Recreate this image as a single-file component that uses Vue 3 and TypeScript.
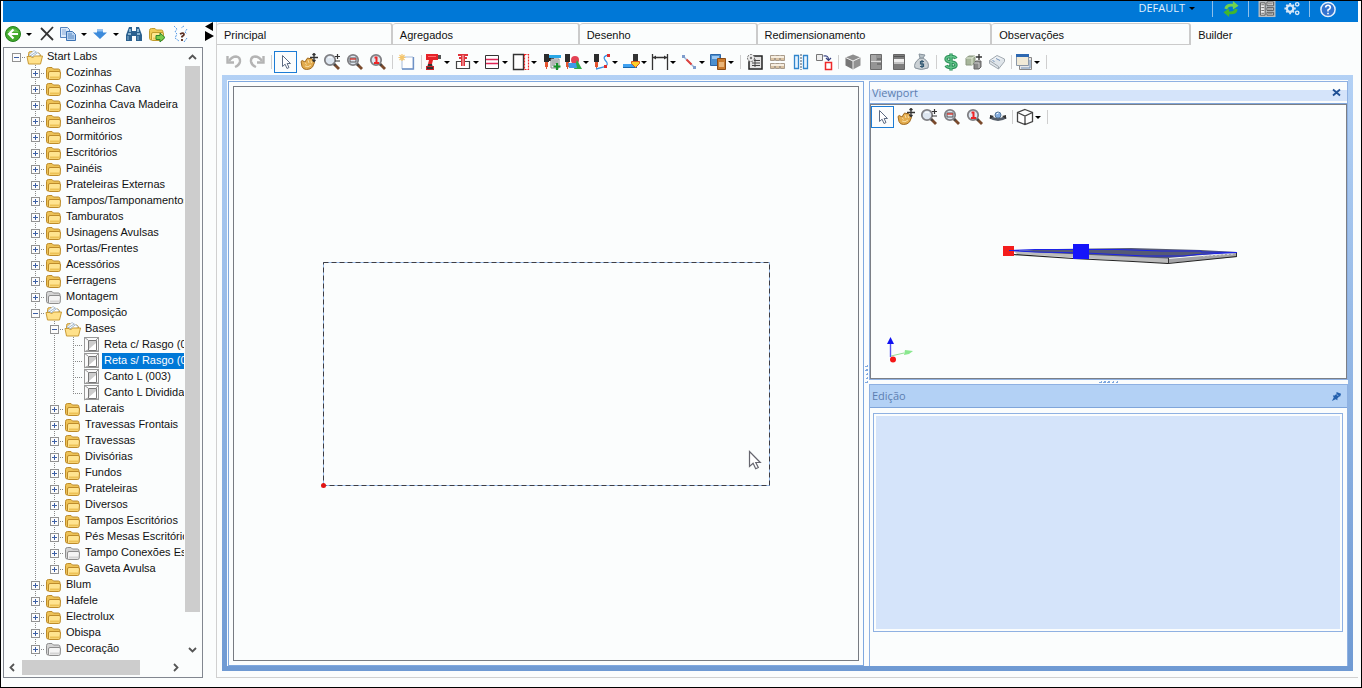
<script setup lang="ts">
import { ref } from 'vue'

interface Tool {
  icon?: string
  label?: string
  drop?: boolean
  active?: boolean
  sep?: boolean
}

interface Row {
  text: string
  level: number
  icon: string
  open?: boolean
  leaf?: boolean
  last?: boolean
}

const lens = (inner: string) =>
  `<path d="M11 11l5 5" stroke="#7a4a2c" stroke-width="2.8"/><path d="M10.500 10.500l2 2" stroke="#444" stroke-width="2.4"/><circle cx="7" cy="7" r="5.200" fill="#dde6f0" stroke="#808084" stroke-width="1.800"/>${inner}`
const drillHead = (x: number) =>
  `<path d="M${x} 1h5v8h-5z" fill="#2b2b2b"/><path d="M${x + 1} 9h3v5h-1v2h-1v-2h-1z" fill="#e5532d"/>`
const folderBody = (a: string, b: string, c: string) =>
  `<path d="M1.500 5.500q0-2 2-2h3.500l1.500 1.500h5q1.500 0 1.500 2v7q0 1-1.500 1h-10q-2 0-2-1.500z" fill="${b}" stroke="${a}"/><path d="M3.500 9q0-1.500 1.500-1.500h9q1.500 0 1.500 1.500l-.5 5q0 1.500-1.500 1.500h-9q-1 0-1-1.500z" fill="${c}" stroke="${a}"/><path d="M5 12.500h9.500v2H5z" fill="${b}"/>`

const icons: Record<string, string> = {
  undo: '<path d="M2.500 3v6.500H9" fill="none" stroke="#b4b4b4" stroke-width="2.400"/><path d="M4 8q3-4.500 7-4.500 4.500.5 4 5-.5 3.500-5 5.500" fill="none" stroke="#b4b4b4" stroke-width="2.400"/>',
  redo: '<path d="M15.500 3v6.500H9" fill="none" stroke="#b4b4b4" stroke-width="2.400"/><path d="M14 8q-3-4.500-7-4.500-4.500.5-4 5 .5 3.500 5 5.500" fill="none" stroke="#b4b4b4" stroke-width="2.400"/>',
  cursor: '<path d="M5.500 2.500v11l2.600-2.300 1.900 4.300 2-1-1.900-4h3.400z" fill="#fff" stroke="#5d6b82"/>',
  hand: '<path d="M1 8.500q1-2 3 0l1 .5 2-3.500q1-1 2 0h1q2-.5 3 1.500 2 0 1.500 2.500l-2 4.500q-2 2.500-6 2.500-3.500 0-4.500-3z" fill="#e3ac4e" stroke="#a06a20"/><path d="M5 9.500l1.500 2M8 7l1 3M11 7.500l.5 2.500M5 13q3 2 6-1" fill="none" stroke="#f9dda2"/><path d="M14 .5v8M10 4.500h8M12.500 2L14 .5 15.500 2M12.500 7L14 8.500 15.500 7" stroke="#333" stroke-width="1.300" fill="none"/>',
  zoom: lens('<path d="M12 3.500h5M14.500 1v5M12 8h5" stroke="#333" stroke-width="1.200"/><path d="M5 5q2-2 4 0" stroke="#fff" fill="none"/>'),
  zoomRect: lens('<path d="M4 5h6v4H4z" fill="none" stroke="#555"/><path d="M4 6h6" stroke="#d6423a" stroke-width="1.500"/>'),
  zoomOne: lens('<path d="M5.500 4.500h2v5M5 10h5" stroke="#ee2525" stroke-width="2" fill="none"/>'),
  fresh: '<path d="M5 4h10v12H4V7z" fill="#fff" stroke="#a9bcd9"/><path d="M15.500 4v12H4" fill="none" stroke="#6e91c6" stroke-width="1.300"/><path d="M4 1v7M.5 4.500h7M1.500 2l5 5M6.500 2l-5 5" stroke="#f5c56a" stroke-width="1.200"/>',
  drill: '<path d="M1 1h12v6H8l-1 4H3l1-4H1z" fill="#e62329"/><path d="M13 2h3v4h-3z" fill="#555"/><path d="M3 11h4l1 4H2z" fill="#333"/><path d="M1 13h8v4H1z" fill="#c9232a"/><path d="M2 15h6" stroke="#333" stroke-width="2"/><path d="M3 3.500h8" stroke="#ff6d6d"/>',
  boxDrill: '<path d="M2.500 8.500h13v7h-13z" fill="#fff" stroke="#444" stroke-width="1.200"/><path d="M4 1h10v2H4zM7 3h4v10H7zM5 4h8v2H5z" fill="#df333b"/><path d="M9 2v11" stroke="#f8c4c4"/>',
  lines: '<path d="M2.500 2.500h13v13h-13z" fill="#fff" stroke="#333"/><path d="M3 6.500h12M3 10.500h12" stroke="#e02455" stroke-width="1.400"/>',
  dashed: '<path d="M1.500 1.500h10v15h-10z" fill="#fff" stroke="#333" stroke-width="1.400"/><path d="M12.500 1.500h4v15h-4z" fill="none" stroke="#f02424" stroke-width="1.200" stroke-dasharray="2 1"/>',
  drillList: drillHead(1) + '<path d="M6 2h12v3H6z" fill="#2aa7e6"/><path d="M6 5h5v3H6z" fill="#222"/><path d="M8 6h8v9H8z" fill="#eef4f4" stroke="#888"/><path d="M9 8h6M9 10h6M9 12h3" stroke="#777"/><path d="M14 10v7M10.500 13.500h7" stroke="#16922a" stroke-width="2.200"/>',
  drillShapes: drillHead(1) + '<circle cx="11" cy="7" r="4" fill="#e34254"/><path d="M13 7l5 9h-8z" fill="#2eaa48"/><path d="M4 10h8l1 5H5z" fill="#3d9bea"/>',
  drillCurve: drillHead(1) + '<path d="M16 2q-7 1-4 5 5 5-1 7l-8 2" fill="none" stroke="#3a91e0" stroke-width="1.300"/><path d="M14 1h3v3h-3zM11 12h3v3h-3z" fill="#e02d2d"/>',
  edge: '<path d="M1 11h10l2 3H1z" fill="#3fa1f0"/><path d="M1 14.500h14" stroke="#1668b0"/><path d="M11 1h5v7h-5z" fill="#333"/><path d="M9.500 8.500h8v2l-4 4-4-4z" fill="#ffd028" stroke="#d45a20"/>',
  dimension: '<path d="M1.500 1v16M16.500 1v16M2 4.500h14" stroke="#333" stroke-width="1.300"/><path d="M2 4.500l3-2v4zM16 4.500l-3-2v4z" fill="#333"/>',
  diagonal: '<path d="M4 4l11 11" stroke="#9fb7d8" stroke-width="1.500"/><path d="M6.500 6.500l5 5" stroke="#e0413d" stroke-width="2"/><path d="M2 2h3v3H2zM13 13h3v3h-3z" fill="#7e9ccc"/>',
  group: '<path d="M1.500 1.500h10v11h-10z" fill="#4c8fce" stroke="#2c66a8"/><path d="M3 3h7v3H3z" fill="#9cc8f2"/><path d="M8.500 5.500h8v11h-8z" fill="#c97b2f" stroke="#8a4c17"/><path d="M10 9h5v5h-5z" fill="#eab67a"/>',
  report: '<path d="M5 3h11v13H3v-7z" fill="#e4e4e4" stroke="#222" stroke-width="1.500"/><path d="M8 7.500h6M6 10h8M6 12.500h8M9 6v8" stroke="#444"/><circle cx="5" cy="5" r="3.500" fill="#eee" stroke="#666" stroke-dasharray="2 1"/><circle cx="5" cy="5" r="1.200" fill="#777"/>',
  grid: '<g fill="#d8c1a2" stroke="#a89b8b"><path d="M1.500 2.500h4v5h-4zM6.500 2.500h4v5h-4zM11.500 2.500h4v5h-4zM1.500 10.500h4v5h-4zM6.500 10.500h4v5h-4zM11.500 10.500h4v5h-4z"/></g><path d="M2 4h13M2 12h13" stroke="#f6eddf" stroke-width="2"/>',
  mirror: '<path d="M2.500 2.500h4v13h-4zM11.500 2.500h4v13h-4z" fill="#e7f4ff" stroke="#3186cc" stroke-width="1.300"/><path d="M9 1v16" stroke="#456" stroke-dasharray="2 1"/>',
  swap: '<path d="M1.500 1.500h6v6h-6z" fill="#eee" stroke="#777"/><path d="M10.500 9.500h6v7h-6z" fill="#fff" stroke="#ee2929" stroke-width="1.500"/><path d="M8.500 3q5-1 5 3.500M11 5l2.500 2.500L16 5" fill="none" stroke="#354080" stroke-width="1.200"/>',
  cube: '<path d="M9 1.500l7.500 3L9 8 1.500 4.500z" fill="#8e8e8e"/><path d="M1.500 4.500L9 8v8.500l-7.500-4z" fill="#777"/><path d="M16.500 4.500L9 8v8.500l7.500-4z" fill="#929292"/><path d="M1.500 4.500L9 8l7.500-3.500M9 8v8.500" fill="none" stroke="#eee"/>',
  fridge: '<path d="M3.500 1.500h11v15h-11z" fill="#959595" stroke="#6c6c6c"/><path d="M4 8.500h10" stroke="#ddd"/><path d="M10 6h4M10 11h4" stroke="#555"/><path d="M4 2h5v6H4z" fill="#a8a8a8"/>',
  stove: '<path d="M3.500 1.500h11v15h-11z" fill="#7d7d7d" stroke="#666"/><path d="M4 6h10v5H4z" fill="#eee"/><path d="M4 9h10v2H4z" fill="#c4c4c4"/><path d="M4 3.500h10" stroke="#555"/>',
  money: '<path d="M7 5q-7 5-5 10 6 3 13 0 2-6-5-10z" fill="#cbd1d5" stroke="#87939c"/><path d="M6 1l6 1-2 3H7z" fill="#b8c2c8" stroke="#87939c"/><path d="M11 8.500H7.500V11h3v2.500H7M9 7v8" fill="none" stroke="#355b74" stroke-width="1.200"/>',
  dollar: '<path d="M14 5.500Q13 3.500 9 3.500q-5 0-5 2.500t5 3q5 .5 5 3t-5 2.500q-4 0-5-2M9 .5v17" fill="none" stroke="#2b8f58" stroke-width="3.400"/><path d="M14 5.500Q13 3.500 9 3.500q-5 0-5 2.500t5 3q5 .5 5 3t-5 2.500q-4 0-5-2M9 1v16" fill="none" stroke="#62c48a" stroke-width="1.300"/>',
  boxes: '<path d="M1 5l3-2h6v7l-3 2H1z" fill="#a7b69b" stroke="#8a9680"/><path d="M1 5h6v7M7 5l3-2" fill="none" stroke="#e2ead8"/><path d="M9 10l2-2h5v6l-2 2H9z" fill="#898989" stroke="#666"/><path d="M9 10h5v5" fill="none" stroke="#ccc"/><path d="M11 4h6M14 1v6" stroke="#333" stroke-width="1.300"/>',
  tag: '<path d="M1.500 7.500L9 2.500l7.500 3.500-6 7.500z" fill="#edf1f4" stroke="#a1a9b0"/><path d="M1.500 7.500v3l9 5.500 6-7.500V6" fill="#dfe5ea" stroke="#a1a9b0"/><path d="M1.500 7.500l9 6V16" fill="none" stroke="#a1a9b0"/><path d="M4.500 7.500l2 1M8 5.500l4 2" stroke="#7794b8"/>',
  windows: '<path d="M4.500 4.500h12v12h-12z" fill="#e8e8e8" stroke="#888"/><path d="M1.500 1.500h12v11h-12z" fill="#f1ead7" stroke="#8b98a8"/><path d="M1 1h13v3H1z" fill="#2d68b1"/><path d="M6 15h9V7" fill="none" stroke="#6f8fb8"/>',
  orbit: '<path d="M1 9q8 5 16 0" fill="none" stroke="#555e69" stroke-width="3"/><path d="M1 11V7l4 1zM17 11V7l-4 1z" fill="#333"/><circle cx="9" cy="7" r="3" fill="#86afe1" stroke="#55789c"/><path d="M7.500 6l2-1" stroke="#fff"/>',
  wireCube: '<path d="M9 1.500l7.500 3v9l-7.500 3-7.500-3v-9zM1.500 4.500L9 8l7.500-3.500M9 8v8.500" fill="#fff" stroke="#444" stroke-width="1.300"/>',
  back: '<circle cx="9" cy="9" r="7.500" fill="#42a92c" stroke="#24811d"/><path d="M3 7q6-7 12 0" fill="#82d36b" opacity=".6"/><path d="M9.500 4.500L5 9l4.500 4.500M5 9h9" fill="none" stroke="#fff" stroke-width="2.200"/>',
  remove: '<path d="M3 3l12 12M15 2L3 15" stroke="#333" stroke-width="1.800"/>',
  copy: '<path d="M1.500 2.500h7l2 2v8h-9z" fill="#dceafa" stroke="#5684be"/><path d="M3 5h4M3 7h4M3 9h4" stroke="#8aabd7"/><path d="M7.500 6.500h6l3 3v6h-9z" fill="#b7d2f0" stroke="#3c73b4"/><path d="M9 9h4M9 11h6M9 13h6" stroke="#5586c0"/>',
  arrow: '<path d="M6 4.500h6v3h4L9 14 2 7.500h4z" fill="#3d8bdb"/><path d="M6 5.500h6" stroke="#8fbef0" stroke-width="2"/>',
  binoculars: '<path d="M4 2h3v4h4V2h3l3 8v6h-6v-5H7v5H1v-6z" fill="#2b618f"/><path d="M3 9h3M12 9h3M5 4v3M13 4v3" stroke="#abd0e7" stroke-width="1.500"/><path d="M3 11v4M13 11v4" stroke="#86b2d0"/>',
  moveFolder: folderBody('#c09c2c', '#f0cb55', '#ffe791') + '<path d="M8 10.500h4V8l5 4.500-5 4.500v-2.500H8z" fill="#7acb4c" stroke="#2c852a"/>',
  select: '<path d="M3 1l3 3-2 3 2 2-2 4 4 3M13 1l-3 2M16 4l-2 3 2 2M16 13l-3 4" fill="none" stroke="#579be8" stroke-dasharray="2 1"/><path d="M9 9q4-2 4 .5 0 1-2 2v1M11 14v2" fill="none" stroke="#5b3024" stroke-width="1.800"/>',
  folder: folderBody('#bd8b2a', '#edc257', '#ffe490'),
  gray: folderBody('#8d8d8d', '#d4d4d4', '#f4f4f4'),
  open: '<path d="M2.500 5.500q0-2 2-2h3l1.500 1.500h4l1.500 2v7.500h-12z" fill="#f3cd72" stroke="#c69e43"/><path d="M3 7l5-4.500 6 4-3 4z" fill="#fff" stroke="#b7c6d8"/><path d="M4 8l6-4M6 9l5-4" stroke="#9bb4ca"/><path d="M1 8.500h4l1.500 1.500 2-2h8l-2 8h-12z" fill="#ffe18a" stroke="#c99b37"/>',
  module: '<path d="M1.500 1.500h14v14h-14z" fill="#fafafa" stroke="#999"/><path d="M5.500 4.500h8v10h-8z" fill="#fff" stroke="#777"/><path d="M6 5h7v2l-7 6z" fill="#ccc"/><path d="M1 1l4 3M16 1l-3 3M1 16l4-2M16 16l-3-2" stroke="#999"/>',
  refresh: '<path d="M2 8q1-6 9-5V0l6 5-6 4V6Q6 5 5 9z" fill="#71d34c"/><path d="M16 9q-1 6-9 5v3l-6-5 6-4v3q5 1 6-3z" fill="#42b62e"/>',
  list: '<path d="M0 0h18v17H0z" fill="#b9bfc3"/><path d="M2 2h5v13H2zM9 1h7v4H9zM9 7h7v3H9zM9 12h7v3H9z" fill="#eee" stroke="#555"/><path d="M3 4h3M3 7h3M3 10h3M3 13h3M10 3h5M10 8.500h5M10 13.500h5" stroke="#666"/>',
  gears: '<circle cx="6" cy="8" r="3.400" fill="none" stroke="#d6e6f6" stroke-width="2.400"/><path d="M6 2v2M6 12v2M0 8h2M10 8h2M2 4l1.500 1.500M8.500 10.500L10 12M10 4L8.500 5.500M3.500 10.500L2 12" stroke="#d6e6f6" stroke-width="2"/><circle cx="13.500" cy="3.500" r="1.800" fill="none" stroke="#d6e9fb" stroke-width="1.500"/><circle cx="13.500" cy="12.500" r="1.800" fill="none" stroke="#d6e9fb" stroke-width="1.500"/>',
  help: '<circle cx="9" cy="9" r="7.500" fill="#3273d0" stroke="#e5effa" stroke-width="1.600"/><path d="M6.500 7q0-2.500 2.500-2.500T11.500 7q0 1.500-2.500 2.500v1.500M9 12.500v1.500" fill="none" stroke="#fff" stroke-width="1.700"/>',
}

const sep: Tool = { sep: true }
const fileTools: Tool[] = [
  { icon: 'back', label: 'Voltar', drop: true },
  { icon: 'remove', label: 'Excluir' },
  { icon: 'copy', label: 'Copiar', drop: true },
  { icon: 'arrow', label: 'Inserir', drop: true },
  { icon: 'binoculars', label: 'Localizar' },
  { icon: 'moveFolder', label: 'Mover pasta' },
  { icon: 'select', label: 'Selecionar' },
]
const mainTools: Tool[] = [
  { icon: 'undo', label: 'Desfazer' },
  { icon: 'redo', label: 'Refazer' },
  sep,
  { icon: 'cursor', label: 'Selecionar', active: true },
  { icon: 'hand', label: 'Mover vista' },
  { icon: 'zoom', label: 'Zoom' },
  { icon: 'zoomRect', label: 'Zoom janela' },
  { icon: 'zoomOne', label: 'Zoom total' },
  sep,
  { icon: 'fresh', label: 'Novo' },
  sep,
  { icon: 'drill', label: 'Furação', drop: true },
  { icon: 'boxDrill', label: 'Furo de topo', drop: true },
  { icon: 'lines', label: 'Rasgo', drop: true },
  { icon: 'dashed', label: 'Rebaixo', drop: true },
  { icon: 'drillList', label: 'Adicionar usinagem' },
  { icon: 'drillShapes', label: 'Formas', drop: true },
  { icon: 'drillCurve', label: 'Contorno', drop: true },
  { icon: 'edge', label: 'Borda', drop: true },
  { icon: 'dimension', label: 'Cota', drop: true },
  { icon: 'diagonal', label: 'Linha', drop: true },
  { icon: 'group', label: 'Agrupar', drop: true },
  sep,
  { icon: 'report', label: 'Relatório' },
  { icon: 'grid', label: 'Matriz' },
  { icon: 'mirror', label: 'Espelhar' },
  { icon: 'swap', label: 'Substituir' },
  sep,
  { icon: 'cube', label: 'Módulo' },
  { icon: 'fridge', label: 'Porta' },
  { icon: 'stove', label: 'Gaveta' },
  { icon: 'money', label: 'Custo' },
  sep,
  { icon: 'dollar', label: 'Preço' },
  { icon: 'boxes', label: 'Componentes' },
  { icon: 'tag', label: 'Etiqueta' },
  sep,
  { icon: 'windows', label: 'Janelas', drop: true },
  sep,
]
const viewTools: Tool[] = [
  { icon: 'cursor', label: 'Selecionar', active: true },
  { icon: 'hand', label: 'Mover vista' },
  { icon: 'zoom', label: 'Zoom' },
  { icon: 'zoomRect', label: 'Zoom janela' },
  { icon: 'zoomOne', label: 'Zoom total' },
  { icon: 'orbit', label: 'Orbitar' },
  sep,
  { icon: 'wireCube', label: 'Vistas', drop: true },
  sep,
]

const folders = (names: string[], level: number): Row[] =>
  names.map((text) => ({ text, level, icon: 'folder' }))

const rows: Row[] = [
  { text: 'Start Labs', level: 0, icon: 'open', open: true },
  ...folders(['Cozinhas', 'Cozinhas Cava', 'Cozinha Cava Madeira', 'Banheiros', 'Dormitórios', 'Escritórios', 'Painéis', 'Prateleiras Externas', 'Tampos/Tamponamentos', 'Tamburatos', 'Usinagens Avulsas', 'Portas/Frentes', 'Acessórios', 'Ferragens'], 1),
  { text: 'Montagem', level: 1, icon: 'gray' },
  { text: 'Composição', level: 1, icon: 'open', open: true },
  { text: 'Bases', level: 2, icon: 'open', open: true },
  { text: 'Reta c/ Rasgo (001)', level: 3, icon: 'module', leaf: true },
  { text: 'Reta s/ Rasgo (002)', level: 3, icon: 'module', leaf: true },
  { text: 'Canto L (003)', level: 3, icon: 'module', leaf: true },
  { text: 'Canto L Dividida (004)', level: 3, icon: 'module', leaf: true, last: true },
  ...folders(['Laterais', 'Travessas Frontais', 'Travessas', 'Divisórias', 'Fundos', 'Prateleiras', 'Diversos', 'Tampos Escritórios', 'Pés Mesas Escritórios'], 2),
  { text: 'Tampo Conexões Escritórios', level: 2, icon: 'gray' },
  { text: 'Gaveta Avulsa', level: 2, icon: 'folder', last: true },
  ...folders(['Blum', 'Hafele', 'Electrolux', 'Obispa'], 1),
  { text: 'Decoração', level: 1, icon: 'gray' },
]

const tabs = ['Principal', 'Agregados', 'Desenho', 'Redimensionamento', 'Observações', 'Builder']
const activeTab = ref('Builder')
const selected = ref('Reta s/ Rasgo (002)')
</script>

<template>
  <div class="window">
    <header class="titlebar">
      <button class="profile">DEFAULT<span class="caret"></span></button>
      <span class="bar-sep"></span>
      <button class="bar-btn" aria-label="Atualizar"><svg viewBox="0 0 18 18" v-html="icons.refresh"></svg></button>
      <span class="bar-sep"></span>
      <button class="bar-btn" aria-label="Lista"><svg viewBox="0 0 18 18" v-html="icons.list"></svg></button>
      <button class="bar-btn" aria-label="Configurações"><svg viewBox="-1 0 18 18" v-html="icons.gears"></svg></button>
      <span class="bar-sep"></span>
      <button class="bar-btn" aria-label="Ajuda"><svg viewBox="0 0 18 18" v-html="icons.help"></svg></button>
    </header>

    <div class="body">
      <aside class="sidebar">
        <div class="file-tools" role="toolbar">
          <button v-for="t in fileTools" :key="t.icon" class="tool" :class="{ drop: t.drop }" :aria-label="t.label">
            <svg viewBox="0 0 18 18" v-html="icons[t.icon!]"></svg>
            <span v-if="t.drop" class="caret"></span>
          </button>
        </div>
        <div class="tree-box">
          <ul class="tree" role="tree">
            <li v-for="row in rows" :key="row.text" class="row" role="treeitem" :aria-selected="row.text === selected">
              <span v-for="n in row.level" :key="n" class="cell" :class="{ guide: n > 1 }"></span>
              <span class="cell branch" :class="{ guide: row.level > 0, last: row.last }">
                <button v-if="!row.leaf" class="expander" :class="{ plus: !row.open }" :aria-label="row.open ? 'Recolher' : 'Expandir'"></button>
              </span>
              <span class="node-icon"><svg viewBox="0 1 18 16" v-html="icons[row.icon]"></svg></span>
              <span class="label" :class="{ selected: row.text === selected }" @click="selected = row.text">{{ row.text }}</span>
            </li>
          </ul>
          <div class="vscroll">
            <svg class="chev" viewBox="0 0 9 9"><path d="M1 6l3.500-3.500L8 6" /></svg>
            <div class="vtrack"><div class="vthumb"></div></div>
            <svg class="chev" viewBox="0 0 9 9"><path d="M1 3l3.500 3.500L8 3" /></svg>
          </div>
          <div class="hscroll">
            <svg class="chev" viewBox="0 0 9 9"><path d="M6 1L2.500 4.500 6 8" /></svg>
            <div class="htrack"><div class="hthumb"></div></div>
            <svg class="chev" viewBox="0 0 9 9"><path d="M3 1l3.500 3.500L3 8" /></svg>
          </div>
        </div>
      </aside>

      <div class="collapser">
        <svg viewBox="0 0 13 22"><path d="M10 0v9L2 4.500zM2 9v10l9-5z" fill="#000" /></svg>
      </div>

      <main class="main">
        <nav class="tabs" role="tablist">
          <button v-for="t in tabs" :key="t" class="tab" :class="{ active: t === activeTab }" role="tab" :aria-selected="t === activeTab" @click="activeTab = t">{{ t }}</button>
        </nav>
        <div class="tools" role="toolbar">
          <template v-for="(t, i) in mainTools" :key="i">
            <span v-if="t.sep" class="sep"></span>
            <button v-else class="tool" :class="{ drop: t.drop, active: t.active }" :aria-label="t.label">
              <svg viewBox="0 0 18 18" v-html="icons[t.icon!]"></svg>
              <span v-if="t.drop" class="caret"></span>
            </button>
          </template>
        </div>

        <div class="dock">
          <div class="dock-inner">
            <section class="drawing">
              <div class="canvas">
                <svg class="piece" viewBox="0 0 450 228">
                  <rect x="2.500" y="2.500" width="446" height="223" fill="none" stroke="#9dc0ee" />
                  <rect x="2.500" y="2.500" width="446" height="223" fill="none" stroke="#3c3c44" stroke-dasharray="5 3" />
                  <circle cx="2.500" cy="225.500" r="2.500" fill="#e01414" />
                </svg>
                <svg class="pointer" viewBox="0 0 14 20"><path d="M1.500 1.500v15l3.600-3.200 2.600 5.400 2.600-1.200-2.500-5h4.500z" fill="#fff" stroke="#66666f" stroke-width="1.200" /></svg>
              </div>
            </section>
            <div class="split-v"><i v-for="n in 5" :key="n"></i></div>
            <div class="right">
              <section class="panel viewport">
                <h2 class="panel-title light">
                  Viewport
                  <button class="title-btn" aria-label="Fechar"><svg viewBox="0 0 11 11"><path d="M2 2.500l7 6M9 2.500l-7 6" stroke="#1f4f94" stroke-width="1.800" /></svg></button>
                </h2>
                <div class="scene">
                  <div class="view-tools" role="toolbar">
                    <template v-for="(t, i) in viewTools" :key="i">
                      <span v-if="t.sep" class="sep"></span>
                      <button v-else class="tool" :class="{ drop: t.drop, active: t.active }" :aria-label="t.label">
                        <svg viewBox="0 0 18 18" v-html="icons[t.icon!]"></svg>
                        <span v-if="t.drop" class="caret"></span>
                      </button>
                    </template>
                  </div>
                  <svg class="board" viewBox="0 0 236 24">
                    <path d="M8 9l157 11v-4L234 10l-36-2-70-2-74 1z" fill="#555a75" />
                    <path d="M11 9.500l154 7v5L14 12z" fill="#bcbcbc" />
                    <path d="M165 17l69-6v4l-69 6z" fill="#a3a3a6" />
                    <path d="M10 12.500l60 4 60 3 35 2 69-7" fill="none" stroke="#222" stroke-width="1.200" />
                    <path d="M165.500 16v6M233.500 11v4" stroke="#333" />
                    <path d="M200 14l30-2" stroke="#ddd" stroke-dasharray="2 2" />
                    <path d="M6 8.500l26-1h84l42 1.500h40v1l36 .5-40 2-14 1.500h-38l-60-3-50-1z" fill="none" stroke="#1d23e6" />
                    <path d="M0 4h11v10H0z" fill="#f41c1c" />
                    <path d="M6 8.500h10" stroke="#2222dd" />
                    <path d="M70 2h16v15H70z" fill="#1414fa" />
                  </svg>
                  <svg class="axes" viewBox="0 0 30 28">
                    <path d="M6.500 21V8" stroke="#5555f0" stroke-width="1.400" /><path d="M6.500 1l3.500 7H3z" fill="#1111f2" />
                    <path d="M7 20l13-3" stroke="#95dd96" /><path d="M21 14l8 1-4 3-5 1z" fill="#8ae88f" />
                    <circle cx="9" cy="23.500" r="3" fill="#f41616" />
                  </svg>
                </div>
              </section>
              <div class="split-h"><i v-for="n in 5" :key="n"></i></div>
              <section class="panel edit">
                <h2 class="panel-title">
                  Edição
                  <button class="title-btn" aria-label="Fixar"><svg viewBox="0 0 12 12"><path d="M6 1l5 2-1 3H9L7 8v2L5 9 1 11l2-4-1-2h2l2-2z" fill="#2460ad" /><path d="M6 4l2 1" stroke="#9fc3ee" /></svg></button>
                </h2>
                <div class="edit-frame"><div class="edit-fill"></div></div>
              </section>
            </div>
          </div>
        </div>
      </main>
    </div>
  </div>
</template>

<style>
body {
  margin: 0;
  background: #fbfdfd;
}
</style>

<style scoped>
* {
  box-sizing: border-box;
}
button {
  margin: 0;
  padding: 0;
  border: 0;
  background: none;
  font: inherit;
  color: inherit;
}
svg {
  display: block;
  flex: none;
}
.window {
  height: 100vh;
  display: flex;
  flex-direction: column;
  padding: 0 3px 0 2px;
  border: 1px solid #000;
  background: #fbfdfd;
  color: #111;
  font: 11px/14px "Liberation Sans", Arial, sans-serif;
  overflow: hidden;
}
.titlebar {
  height: 21px;
  flex: none;
  display: flex;
  align-items: flex-start;
  justify-content: flex-end;
  padding-right: 18px;
  background: #0078d7;
}
.profile {
  height: 14px;
  display: flex;
  align-items: center;
  gap: 4px;
  margin-right: 12px;
  color: #e4f1fc;
  font: 11px/14px "Open Sans", "Noto Sans", sans-serif;
}
.bar-btn {
  width: 25px;
  display: flex;
  justify-content: center;
}
.bar-btn svg {
  width: 18px;
  height: 17px;
}
.bar-sep {
  width: 1px;
  height: 16px;
  margin: 0 5px;
  background: #8fc0ea;
}
.caret {
  width: 0;
  border: 3px solid transparent;
  border-top-color: #000;
  border-bottom: 0;
}
.body {
  flex: 1;
  min-height: 0;
  display: flex;
  padding-bottom: 9px;
}
.sidebar {
  width: 200px;
  flex: none;
  display: flex;
  flex-direction: column;
}
.file-tools {
  height: 25px;
  flex: none;
  display: flex;
  align-items: center;
  padding-bottom: 1px;
}
.tool {
  width: 23px;
  height: 22px;
  flex: none;
  display: flex;
  align-items: center;
  justify-content: center;
  border: 1px solid transparent;
}
.tool svg {
  width: 18px;
  height: 18px;
}
.tool.drop {
  width: 29px;
  justify-content: space-between;
  padding-right: 2px;
}
.file-tools .drop {
  width: 32px;
}
.tool.active {
  border-color: #1c7cd5;
}
.sep {
  width: 1px;
  height: 14px;
  flex: none;
  margin: 0 2px 0 3px;
  background: #cfcfcf;
}
.tree-box {
  flex: 1;
  min-height: 0;
  display: grid;
  grid-template: minmax(0, 1fr) 18px / minmax(0, 1fr) 18px;
  border: 1px solid #828790;
}
.tree {
  margin: 0;
  padding: 1px 0 0 3px;
  list-style: none;
  overflow: hidden;
}
.row {
  height: 16px;
  display: flex;
  white-space: nowrap;
}
.cell {
  position: relative;
  width: 19px;
  height: 16px;
  flex: none;
}
.guide::before {
  content: "";
  position: absolute;
  top: 0;
  bottom: 0;
  left: 9px;
  width: 1px;
  background: repeating-linear-gradient(#888 0 1px, transparent 1px 2px);
}
.guide.last::before {
  bottom: 8px;
}
.branch::after {
  content: "";
  position: absolute;
  top: 8px;
  left: 9px;
  right: 0;
  height: 1px;
  background: repeating-linear-gradient(90deg, #888 0 1px, transparent 1px 2px);
}
.expander {
  position: absolute;
  z-index: 1;
  top: 4px;
  left: 5px;
  width: 9px;
  height: 9px;
  border: 1px solid #929292;
  background: linear-gradient(#3c5fa5, #3c5fa5) center / 5px 1px no-repeat, #fcfcfc;
}
.expander.plus {
  background: linear-gradient(#3c5fa5, #3c5fa5) center / 5px 1px no-repeat, linear-gradient(#3c5fa5, #3c5fa5) center / 1px 5px no-repeat, #fcfcfc;
}
.node-icon {
  width: 19px;
  flex: none;
}
.node-icon svg {
  width: 18px;
  height: 16px;
}
.label {
  height: 16px;
  padding: 0 2px;
  line-height: 14px;
}
.label.selected {
  background: #0078d7;
  color: #fff;
}
.chev {
  width: 9px;
  height: 9px;
  flex: none;
  fill: none;
  stroke: #555;
  stroke-width: 1.8;
}
.vscroll {
  display: flex;
  flex-direction: column;
  align-items: center;
  padding: 5px 2px 5px 0;
}
.vtrack {
  flex: 1;
  width: 15px;
  padding: 4px 0;
}
.vthumb {
  height: 95%;
  background: #cdcdcd;
}
.hscroll {
  display: flex;
  align-items: center;
  padding: 0 4px 2px;
}
.htrack {
  flex: 1;
  height: 15px;
  padding: 0 5px;
}
.hthumb {
  width: 82%;
  height: 15px;
  background: #cdcdcd;
}
.collapser {
  width: 13px;
  flex: none;
}
.collapser svg {
  width: 13px;
  height: 22px;
}
.main {
  flex: 1;
  min-width: 0;
  display: flex;
  flex-direction: column;
  border: solid #d0d0d0;
  border-width: 0 0 1px 1px;
}
.tabs {
  height: 23px;
  flex: none;
  display: grid;
  grid-template-columns: 176fr 187fr 178fr 235fr 199fr 167fr;
  padding-top: 1px;
}
.tab {
  padding: 2px 0 0 7px;
  border: solid #cbcbcb;
  border-width: 1px 2px 1px 0;
  border-radius: 3px 3px 0 0;
  text-align: left;
}
.tab.active {
  border-color: transparent;
}
.tools {
  flex: none;
  display: flex;
  align-items: center;
  height: 30px;
  padding: 4px 0 0 5px;
}
.dock {
  flex: 1;
  min-height: 0;
  display: flex;
  margin: 0 5px 6px;
  padding: 5px;
  background: linear-gradient(#b3d1f5, #6f9ad3);
}
.dock-inner {
  flex: 1;
  min-width: 0;
  display: grid;
  grid-template-columns: minmax(0, 636fr) 5px minmax(0, 479fr);
  padding: 1px 0 0 1px;
  background: #fbfdfd;
}
.drawing {
  display: flex;
  padding: 4px;
  border: 1px solid #7fa8df;
}
.canvas {
  flex: 1;
  position: relative;
  display: flex;
  align-items: center;
  justify-content: center;
  border: 1px solid #777b82;
}
.piece {
  width: 450px;
  height: 228px;
}
.pointer {
  position: absolute;
  left: 514px;
  top: 363px;
  width: 14px;
  height: 20px;
}
.split-v {
  display: flex;
  flex-direction: column;
  align-items: center;
  justify-content: center;
  gap: 2px;
}
.split-v i,
.split-h i {
  width: 3px;
  height: 2px;
  background: linear-gradient(135deg, transparent 40%, #7fa8df 40%);
}
.right {
  display: grid;
  grid-template-rows: minmax(0, 299fr) 4px minmax(0, 282fr);
}
.panel {
  display: flex;
  flex-direction: column;
  min-height: 0;
  border: 1px solid #8fb1e2;
}
.panel.edit {
  border-bottom: 0;
}
.panel-title {
  height: 23px;
  flex: none;
  display: flex;
  align-items: center;
  justify-content: space-between;
  margin: 0;
  padding: 0 5px 0 2px;
  border-bottom: 1px solid #7fa5da;
  background: #b3d1f5;
  color: #5c7eb1;
  font: 11px/20px "Open Sans", "Noto Sans", sans-serif;
}
.panel-title.light {
  height: 22px;
  background: linear-gradient(#fbfdfd 8px, #d5e4fa 8px 19px, #fbfdfd 19px);
}
.title-btn svg {
  width: 11px;
  height: 11px;
}
.scene {
  flex: 1;
  position: relative;
  border: 1px solid #7b7f86;
}
.view-tools {
  display: flex;
  align-items: center;
  height: 24px;
}
.board {
  position: absolute;
  left: 132px;
  top: 137px;
  width: 236px;
  height: 24px;
}
.axes {
  position: absolute;
  left: 13px;
  bottom: 14px;
  width: 30px;
  height: 28px;
}
.split-h {
  display: flex;
  align-items: center;
  justify-content: center;
  gap: 1px;
}
.edit-frame {
  flex: 1;
  margin: 5px 4px 34px 3px;
  padding: 2px;
  border: 1px solid #8fb1e2;
}
.edit-fill {
  height: 100%;
  background: #d5e4fa;
}
</style>
